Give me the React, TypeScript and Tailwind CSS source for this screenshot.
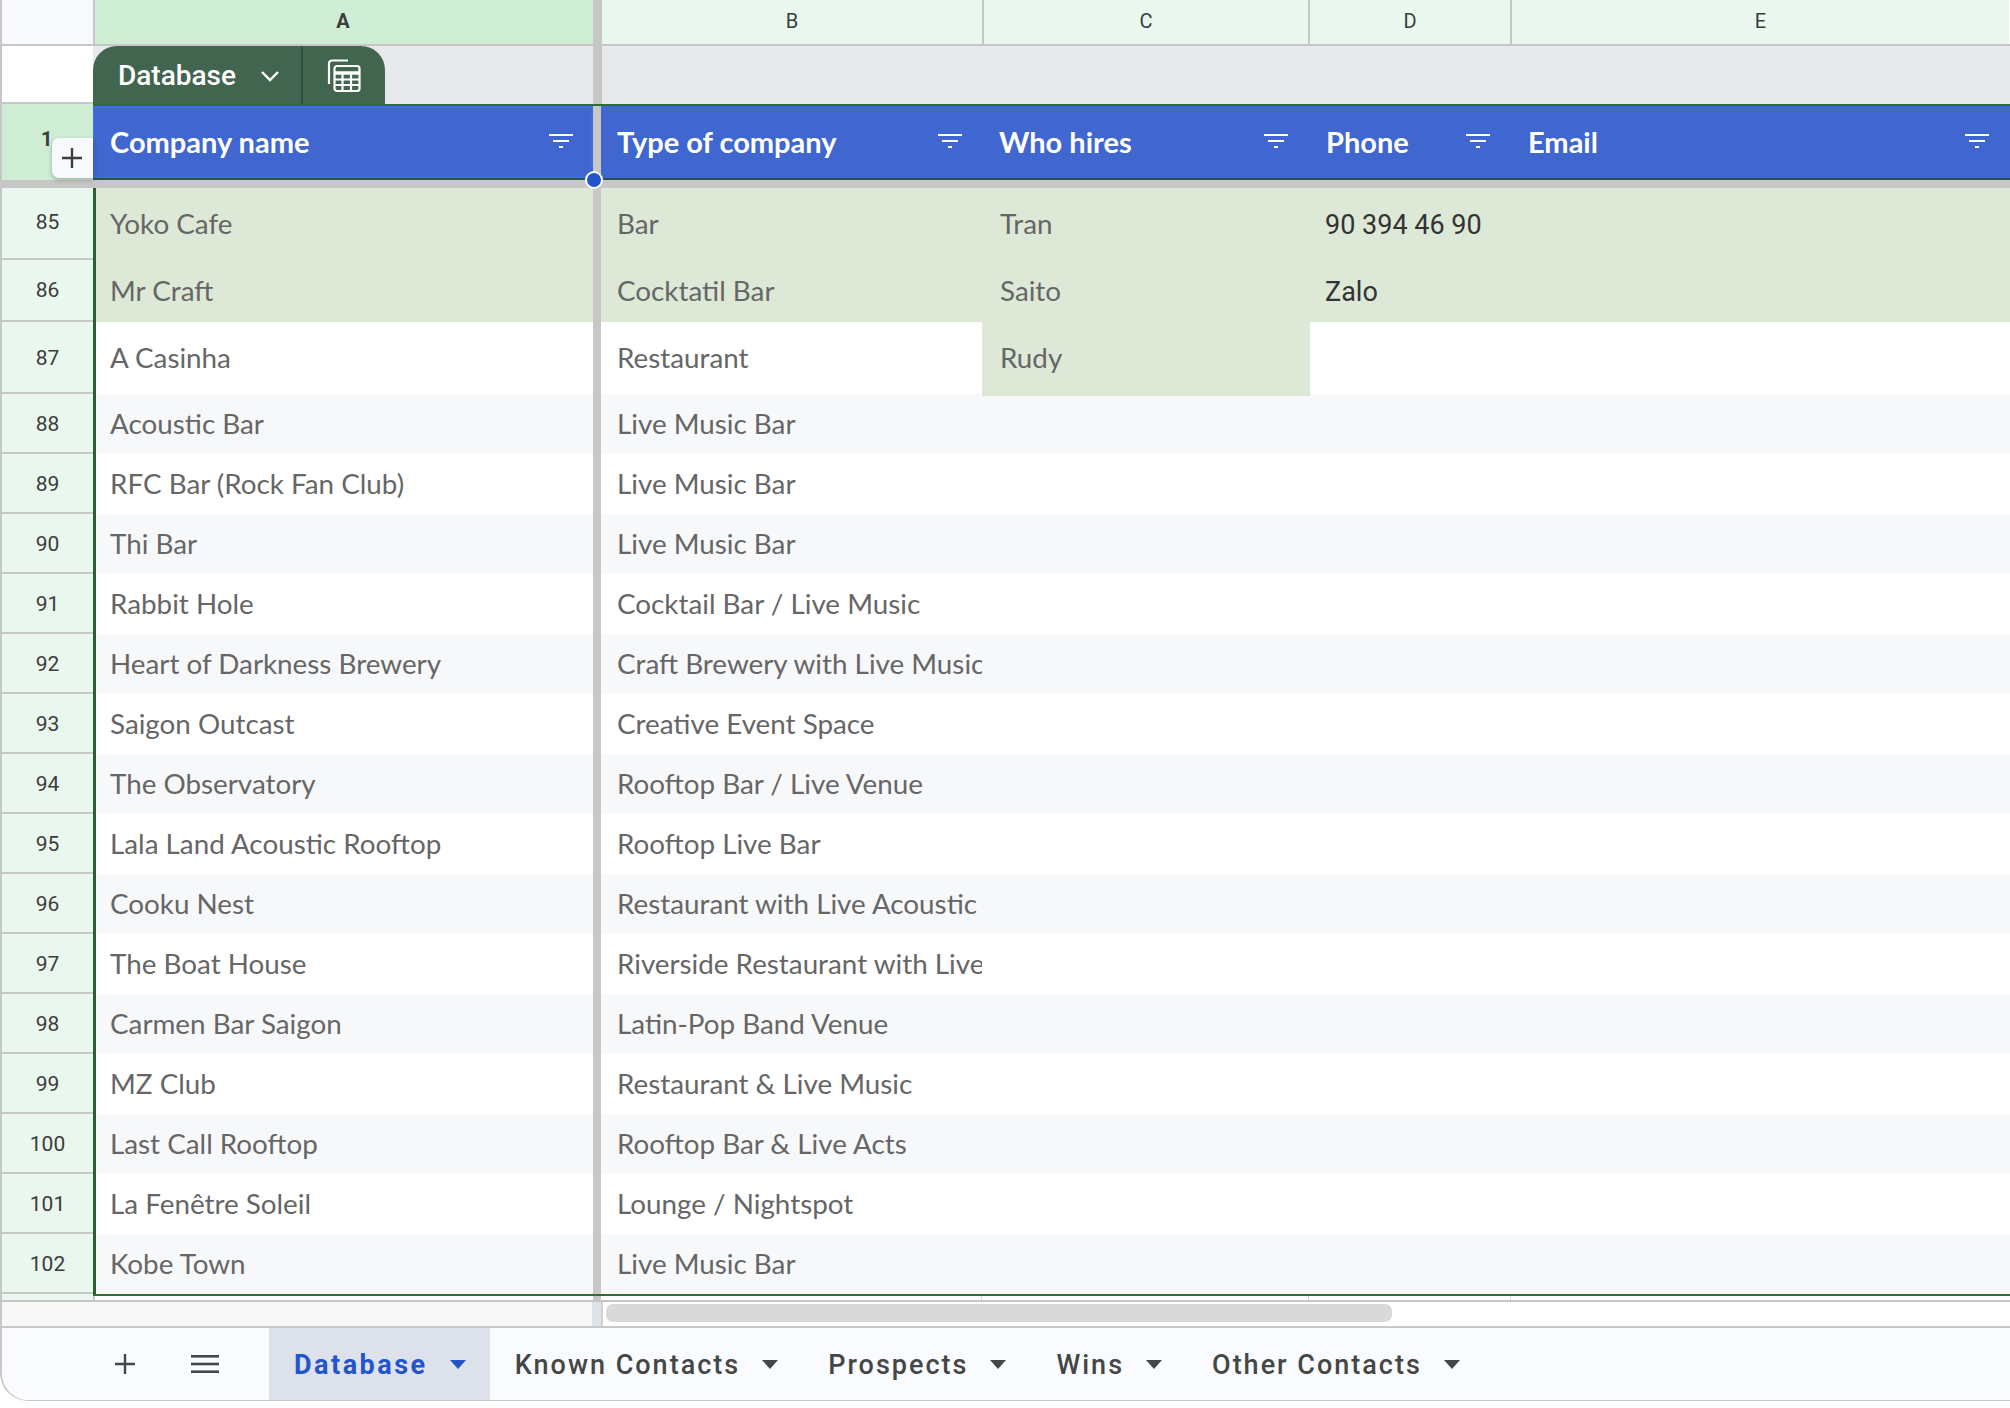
const sans = 'font-["Lato",sans-serif]';

const green = [
  { n: 85, a: 'Yoko Cafe', b: 'Bar', c: 'Tran', d: '90 394 46 90', h: 'h-[72px]', pad: 'pb-[1px]' },
  { n: 86, a: 'Mr Craft', b: 'Cocktatil Bar', c: 'Saito', d: 'Zalo', h: 'h-[62px]', pad: 'pt-[1px]' },
];

const rows: [number, string, string][] = [
  [88, 'Acoustic Bar', 'Live Music Bar'],
  [89, 'RFC Bar (Rock Fan Club)', 'Live Music Bar'],
  [90, 'Thi Bar', 'Live Music Bar'],
  [91, 'Rabbit Hole', 'Cocktail Bar / Live Music'],
  [92, 'Heart of Darkness Brewery', 'Craft Brewery with Live Music'],
  [93, 'Saigon Outcast', 'Creative Event Space'],
  [94, 'The Observatory', 'Rooftop Bar / Live Venue'],
  [95, 'Lala Land Acoustic Rooftop', 'Rooftop Live Bar'],
  [96, 'Cooku Nest', 'Restaurant with Live Acoustic'],
  [97, 'The Boat House', 'Riverside Restaurant with Live Music'],
  [98, 'Carmen Bar Saigon', 'Latin-Pop Band Venue'],
  [99, 'MZ Club', 'Restaurant & Live Music'],
  [100, 'Last Call Rooftop', 'Rooftop Bar & Live Acts'],
  [101, 'La Fenêtre Soleil', 'Lounge / Nightspot'],
  [102, 'Kobe Town', 'Live Music Bar'],
];

const tabs = ['Known Contacts', 'Prospects', 'Wins', 'Other Contacts'];

function FilterIcon() {
  return (
    <svg width="24" height="16" viewBox="0 0 24 16" fill="#fff" className="shrink-0">
      <rect x="0" y="0" width="24" height="2" />
      <rect x="4" y="6" width="16" height="2" />
      <rect x="10" y="12" width="4" height="2" />
    </svg>
  );
}

function TableIcon() {
  return (
    <svg width="34" height="33" viewBox="0 0 34 33" fill="none" stroke="#fff" strokeWidth="2.2">
      <path d="M21 1.5H5a3 3 0 0 0-3 3V25" />
      <rect x="7.5" y="7" width="25" height="25" rx="2.5" />
      <path d="M7.5 14h25" strokeWidth="3.5" />
      <path d="M7.5 20.5h25M7.5 26h25M15.5 15v17M24 15v17" />
    </svg>
  );
}

function Triangle({ color }: { color: string }) {
  return (
    <svg width="16" height="9" viewBox="0 0 16 9" fill={color} className="shrink-0">
      <path d="M0 0h16L8 9z" />
    </svg>
  );
}

function RowNum({ n, h, pad = 'pt-[3px]' }: { n: number; h: string; pad?: string }) {
  return (
    <div className={`${h} ${pad} bg-[#e9f7ee] w-[91px] shrink-0 flex items-center justify-center border-b-2 border-[#c7c7c7] font-['Roboto',sans-serif] text-[21px] text-[#3c3c3c]`}>
      {n}
    </div>
  );
}

function HeaderCell({ label, w, pl, pr }: { label: string; w: string; pl: string; pr: string }) {
  return (
    <div className={`${w} ${pl} ${pr} shrink-0 flex items-center justify-between`}>
      <span className={`${sans} text-[29px] font-bold text-white`}>{label}</span>
      <FilterIcon />
    </div>
  );
}

export default function App() {
  return (
    <div className="w-[2010px] h-[1408px] bg-white overflow-hidden">
      <div className="w-[2010px] h-[1401px] flex flex-col border-l-2 border-b border-[#c7c7c7] rounded-bl-[28px] overflow-hidden bg-white">
        {/* column letters */}
        <div className="h-[46px] flex shrink-0 border-b-2 border-[#c7c7c7] font-['Roboto',sans-serif] text-[20px] text-[#3c3c3c]">
          <div className="w-[91px] bg-[#f8f9fd]" />
          <div className="w-[2px] bg-[#c7c7c7]" />
          <div className="w-[498px] pr-[2px] pb-[2px] bg-[#cfedd5] flex items-center justify-center font-bold">A</div>
          <div className="w-[9px] bg-[#c7c7c7]" />
          <div className="w-[382px] pb-[2px] bg-[#e9f7ee] flex items-center justify-center border-r-2 border-[#c7c7c7]">B</div>
          <div className="w-[326px] pb-[2px] bg-[#e9f7ee] flex items-center justify-center border-r-2 border-[#c7c7c7]">C</div>
          <div className="w-[202px] pb-[2px] bg-[#e9f7ee] flex items-center justify-center border-r-2 border-[#c7c7c7]">D</div>
          <div className="w-[497px] pb-[2px] bg-[#e9f7ee] flex items-center justify-center">E</div>
        </div>

        {/* grouped table tab */}
        <div className="h-[58px] flex shrink-0">
          <div className="w-[91px] border-b-2 border-[#c7c7c7]" />
          <div className="flex-1 flex bg-[#e8e9ed]">
            <div className="w-[292px] flex bg-[#42654f] rounded-t-[24px] text-white">
              <div className="w-[210px] flex items-center pl-[25px] gap-[24px] border-r-2 border-[#34513f]">
                <span className="font-['Roboto',sans-serif] text-[28px] font-medium pt-[2px]">Database</span>
                <svg width="20" height="12" viewBox="0 0 20 12" fill="none" stroke="#fff" strokeWidth="2.4" className="mt-[2px]">
                  <path d="M2 2l8 8 8-8" />
                </svg>
              </div>
              <div className="flex-1 flex items-center justify-center">
                <TableIcon />
              </div>
            </div>
            <div className="w-[208px]" />
            <div className="w-[9px] bg-[#c7c7c7]" />
          </div>
        </div>

        {/* header row */}
        <div className="h-[84px] flex shrink-0 relative">
          <div className="w-[91px] shrink-0 flex flex-col">
            <div className="h-[76px] bg-[#cfedd5] flex items-center pl-[39px] pb-[6px] font-['Roboto',sans-serif] text-[20px] font-bold text-[#3c3c3c]">1</div>
            <div className="h-[8px] bg-[#c7c7c7]" />
          </div>
          <div className="flex-1 flex flex-col">
            <div className="h-[76px] flex bg-[#4066d0] border-t-2 border-b-2 border-t-[#2f6b34] border-b-[#2d5348]">
              <div className="w-[500px] shrink-0 flex items-center justify-between pl-[15px] pr-[18px] border-2 border-[#3f6ce0]">
                <span className={`${sans} text-[29px] font-bold text-white`}>Company name</span>
                <FilterIcon />
              </div>
              <div className="w-[8px] shrink-0 bg-[#c7c7c7]" />
              <HeaderCell label="Type of company" w="w-[381px]" pl="pl-[16px]" pr="pr-[20px]" />
              <HeaderCell label="Who hires" w="w-[327px]" pl="pl-[17px]" pr="pr-[21px]" />
              <HeaderCell label="Phone" w="w-[202px]" pl="pl-[17px]" pr="pr-[21px]" />
              <HeaderCell label="Email" w="w-[499px]" pl="pl-[17px]" pr="pr-[21px]" />
            </div>
            <div className="h-[8px] bg-[#c7c7c7]" />
          </div>

          {/* row insert button */}
          <div className="absolute left-[50px] top-[34px] w-[41px] h-[40px] rounded-l-[7px] bg-[#f8f9fd] shadow-[0_2px_5px_rgba(0,0,0,0.25)] flex items-center justify-center pr-[2px]">
            <svg width="20" height="20" viewBox="0 0 20 20" stroke="#3c3c3c" strokeWidth="2.4">
              <path d="M10 0v20M0 10h20" />
            </svg>
          </div>
          {/* resize handle */}
          <div className="absolute left-[583px] top-[67px] w-[18px] h-[18px] rounded-full bg-[#2255cc] border-2 border-white" />
        </div>

        {/* highlighted rows */}
        {green.map((r) => (
          <div key={r.n} className={`${r.h} flex shrink-0`}>
            <RowNum n={r.n} h={r.h} pad={r.pad} />
            <div className={`${sans} flex flex-1 bg-[#dde9d6] text-[27.8px] text-[#666666]`}>
              <div className="w-[500px] shrink-0 flex items-center pl-[14px] pb-[1px] border-l-[3px] border-[#2a5f32]">{r.a}</div>
              <div className="w-[8px] shrink-0 bg-[#c7c7c7]" />
              <div className="w-[381px] shrink-0 flex items-center pl-[16px] pb-[1px]">{r.b}</div>
              <div className="w-[327px] shrink-0 flex items-center pl-[18px] pb-[1px]">{r.c}</div>
              <div className="flex-1 flex items-center pl-[16px] pt-[2px] font-['Roboto',sans-serif] text-[27px] text-[#333333]">{r.d}</div>
            </div>
          </div>
        ))}

        <div className="h-[72px] flex shrink-0">
          <RowNum n={87} h="h-[72px]" />
          <div className={`${sans} flex flex-1 items-start text-[27.8px] text-[#666666]`}>
            <div className="w-[500px] h-[72px] shrink-0 flex items-center pl-[14px] pb-[1px] border-l-[3px] border-[#2a5f32]">A Casinha</div>
            <div className="w-[8px] h-[72px] shrink-0 bg-[#c7c7c7]" />
            <div className="w-[381px] h-[72px] shrink-0 flex items-center pl-[16px] pb-[1px]">Restaurant</div>
            <div className="w-[328px] h-[74px] shrink-0 relative flex items-center pl-[18px] pb-[3px] bg-[#dde9d6]">Rudy</div>
          </div>
        </div>

        {/* plain rows */}
        {rows.map(([n, a, b], i) => (
          <div key={n} className="h-[60px] flex shrink-0">
            <RowNum n={n} h="h-[60px]" />
            <div className={`${sans} flex flex-1 text-[27.8px] text-[#666666] ${i % 2 === 0 ? 'bg-[#f7f8fa]' : 'bg-white'}`}>
              <div className="w-[500px] shrink-0 flex items-center pl-[14px] pb-[1px] border-l-[3px] border-[#2a5f32]">{a}</div>
              <div className="w-[8px] shrink-0 bg-[#c7c7c7]" />
              <div className="w-[365px] shrink-0 ml-[16px] pb-[1px] flex items-center overflow-hidden whitespace-nowrap">{b}</div>
            </div>
          </div>
        ))}

        {/* bottom edge of the table */}
        <div className="h-[8px] flex shrink-0 border-b-2 border-[#c7c7c7]">
          <div className="w-[91px] bg-[#e9f7ee]" />
          <div className="flex-1 flex flex-col">
            <div className="h-[2px] bg-[#2f6b34]" />
            <div className="flex-1 flex">
              <div className="w-[500px] border-l-2 border-[#c7c7c7]" />
              <div className="w-[8px] bg-[#c7c7c7]" />
              <div className="w-[381px] border-r border-[#d5d5d5]" />
              <div className="w-[327px] border-r border-[#d5d5d5]" />
              <div className="w-[202px] border-r border-[#d5d5d5]" />
            </div>
          </div>
        </div>

        {/* scrollbar */}
        <div className="h-[26px] flex shrink-0 border-b-2 border-[#c7c7c7]">
          <div className="w-[590px] bg-[#f8f8f8]" />
          <div className="w-[11px] bg-[#dde3ea] border-r-2 border-[#d0d0d0]" />
          <div className="flex-1 pl-[3px] pt-[2px]">
            <div className="w-[786px] h-[18px] rounded-[7px] bg-[#d9d9d9]" />
          </div>
        </div>

        {/* sheet tabs */}
        <div className="flex-1 flex bg-[#f9fbfe] font-['Roboto',sans-serif] text-[27px] font-medium tracking-[2px] text-[#444746]">
          <div className="w-[267px] shrink-0 flex items-center pl-[113px] gap-[56px]">
            <svg width="20" height="20" viewBox="0 0 20 20" stroke="#444746" strokeWidth="2.4" className="shrink-0">
              <path d="M10 0v20M0 10h20" />
            </svg>
            <svg width="28" height="18" viewBox="0 0 28 18" fill="#444746" className="shrink-0">
              <rect y="0" width="28" height="2.6" />
              <rect y="7.7" width="28" height="2.6" />
              <rect y="15.4" width="28" height="2.6" />
            </svg>
          </div>
          <div className="flex items-center gap-[22px] pl-[25px] pr-[24px] bg-[#dde1e9] font-bold tracking-[2.5px] text-[#2255cc]">
            <span className="pt-[2px]">Database</span>
            <Triangle color="#2255cc" />
          </div>
          {tabs.map((t) => (
            <div key={t} className="flex items-center gap-[22px] px-[25px]">
              <span className="pt-[2px]">{t}</span>
              <Triangle color="#444746" />
            </div>
          ))}
        </div>
      </div>
    </div>
  );
}
